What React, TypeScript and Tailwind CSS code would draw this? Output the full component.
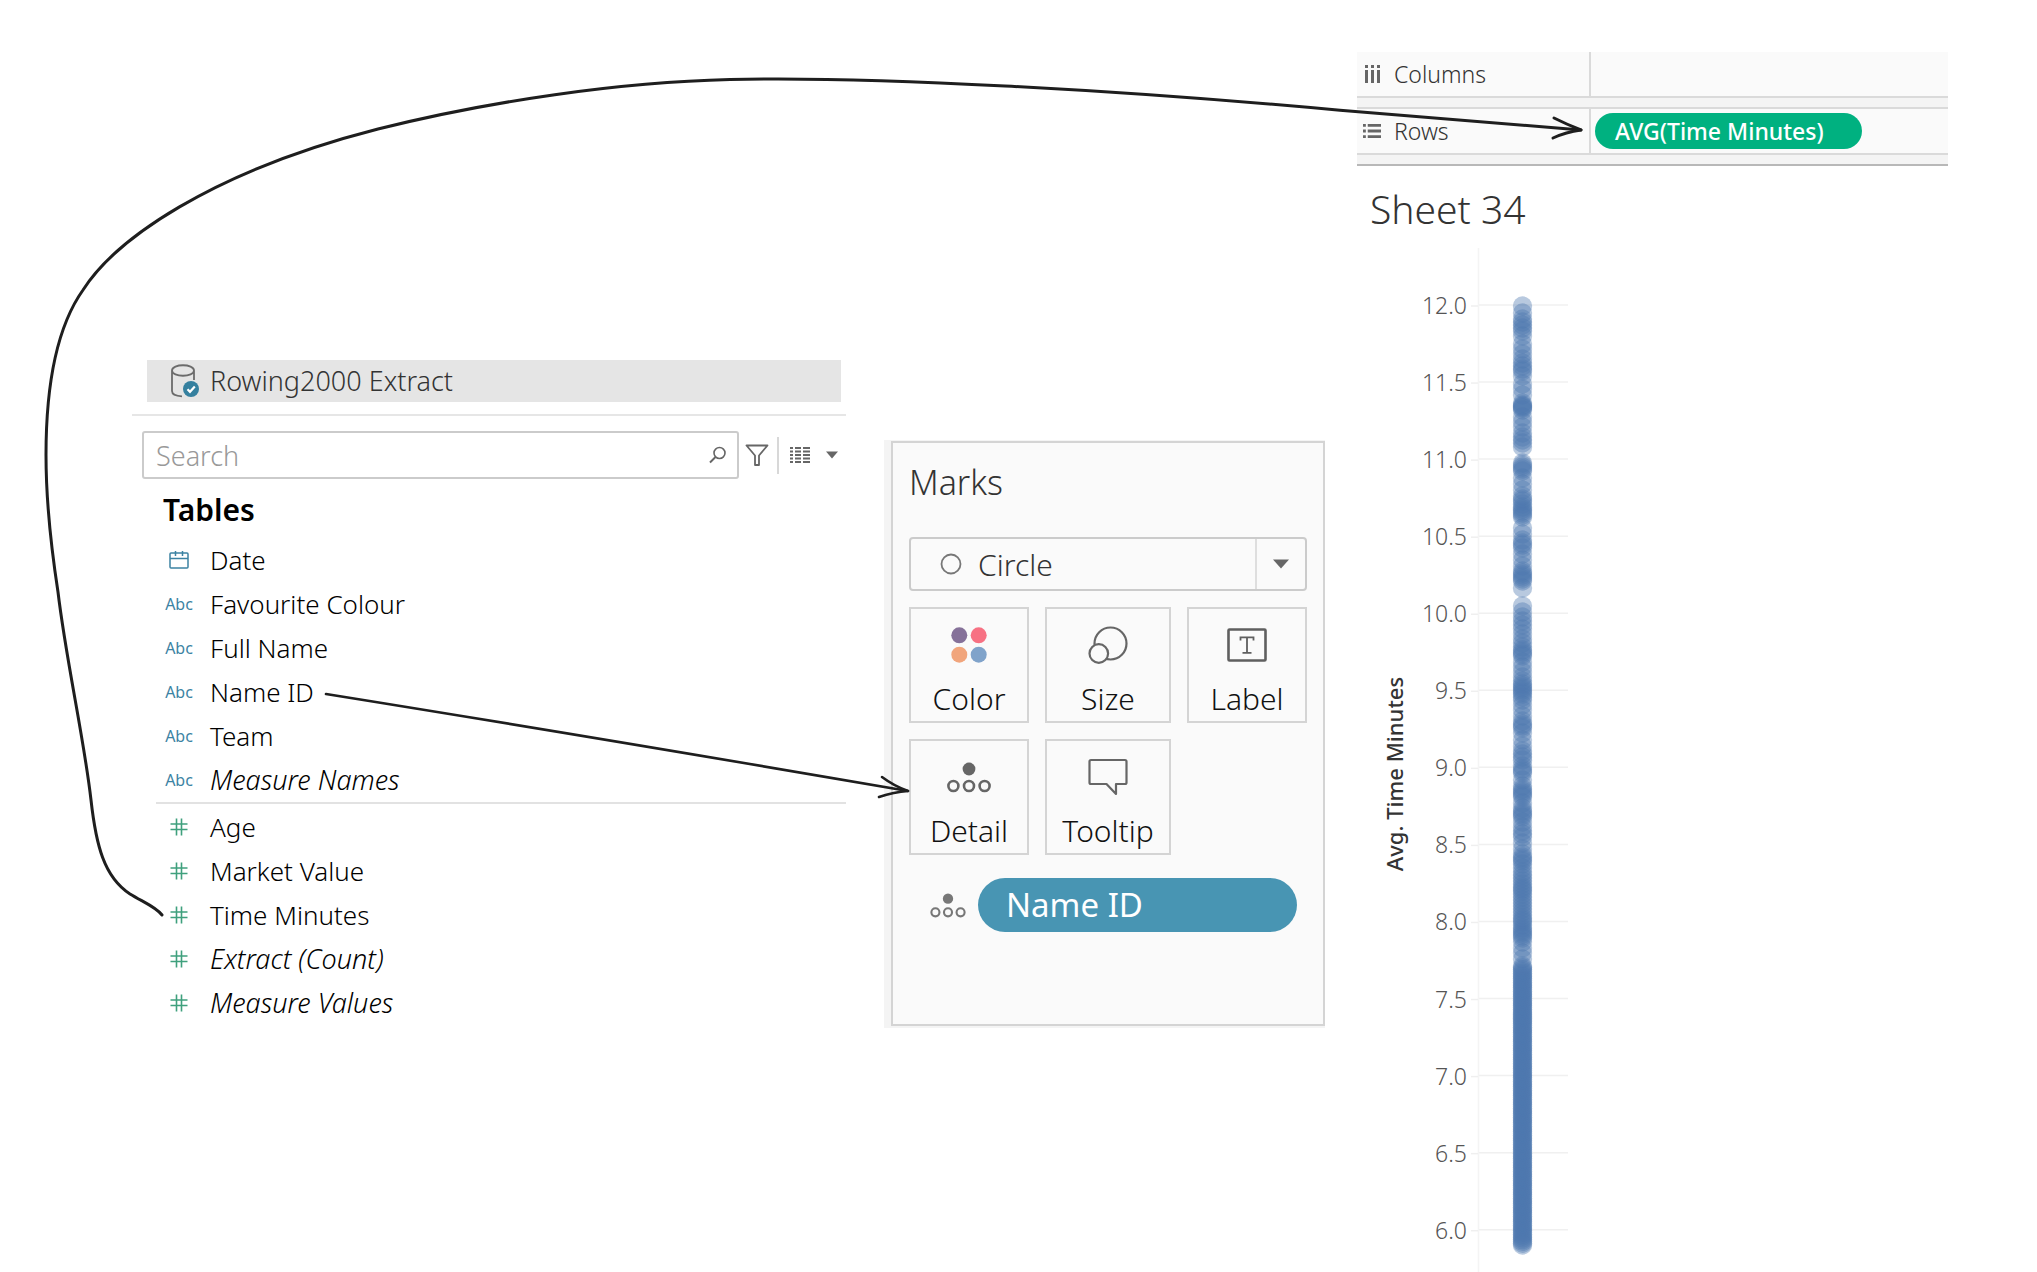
import type { ReactNode } from "react";

const DIMENSIONS = ["Favourite Colour", "Full Name", "Name ID", "Team"];
const MEASURES = ["Age", "Market Value", "Time Minutes"];
const GENERATED_MEASURES = ["Extract (Count)", "Measure Values"];

/* Vertical positions of the sparse marks; below them the marks run together. */
const SPARSE_MARKS = [
  306, 313, 319, 322, 325, 328, 331, 336, 344, 349, 354, 359, 363, 366, 369, 371, 376, 384, 389, 395, 403, 405, 406, 407, 408, 410, 417, 422, 427, 433, 437, 440, 443, 447,
  463, 465, 467, 469, 471, 478, 484, 490, 496, 499, 501, 504, 507, 509, 511, 513, 515, 517, 528, 534, 540, 543, 545, 548, 554, 560, 566, 571, 573, 575, 577, 579, 581, 588,
  606, 612, 617, 621, 625, 629, 634, 639, 643, 647, 650, 652, 654, 656, 662, 667, 672, 677, 681, 684, 686, 688, 690, 692, 694, 697, 700, 705, 710, 716, 721, 724, 726, 728,
  733, 740, 746, 751, 754, 757, 760, 766, 769, 771, 773, 780, 786, 789, 791, 793, 795, 797, 803, 808, 811, 813, 815, 817, 822, 827, 831, 834, 837, 843, 849, 854, 857, 859, 861,
  864, 868, 872, 875, 878, 881, 884, 887, 889, 891, 894, 897, 900, 903, 906, 909, 912, 915, 918, 920, 922, 925, 928, 930, 932, 934, 936, 938, 942, 948, 953, 959,
];
const DENSE_MARKS = Array.from({ length: 156 }, (_, i) => 966 + i * 1.8);
const TICKS = ["12.0", "11.5", "11.0", "10.5", "10.0", "9.5", "9.0", "8.5", "8.0", "7.5", "7.0", "6.5", "6.0"];

function HashIcon() {
  return (
    <svg width="18" height="18" viewBox="0 0 18 18" fill="none" stroke="#3fa07d" strokeWidth="1.6" aria-hidden="true">
      <path d="M6.5 0.5v17M11.5 0.5v17M0.5 6h17M0.5 11.5h17" />
    </svg>
  );
}

function CalendarIcon() {
  return (
    <svg width="20" height="20" viewBox="0 0 20 20" fill="none" stroke="#3c83a3" strokeWidth="1.5" aria-hidden="true">
      <rect x="1" y="3" width="18" height="15" rx="1" />
      <path d="M1 8.5h18M6.5 1v5M13.5 1v5" />
    </svg>
  );
}

function DetailIcon({ size, tone }: { size: number; tone: string }) {
  return (
    <svg width={size} height={Math.round(size * 0.7)} viewBox="0 0 44 31" fill="none" stroke={tone} strokeWidth="2.6" aria-hidden="true">
      <circle cx="22" cy="7" r="6.4" fill={tone} stroke="none" />
      <circle cx="6.4" cy="24" r="5" />
      <circle cx="22" cy="24" r="5" />
      <circle cx="37.6" cy="24" r="5" />
    </svg>
  );
}

function Field({ icon, children, generated }: { icon: ReactNode; children: ReactNode; generated?: boolean }) {
  return (
    <li className="flex h-11 items-center">
      <span className="flex w-10 shrink-0 items-center justify-center text-base font-normal text-[#3c83a3]">{icon}</span>
      <span className={generated ? "ml-[11px] text-[27px] italic" : "ml-[11px] text-[26px]"}>{children}</span>
    </li>
  );
}

function DataPane() {
  return (
    <section className="min-w-0 pt-[360px] font-light text-black">
      <header className="mr-[5px] ml-[15px] flex h-[42px] items-center bg-[#e5e5e5] pl-6">
        <svg width="28" height="34" viewBox="0 0 28 34" fill="none" stroke="#6b6b6b" strokeWidth="1.8" aria-hidden="true">
          <path d="M1 6.5C1 -0.5 23 -0.5 23 6.5S1 13.5 1 6.5V27C1 30 5 32 11 32.3M23 6.5V16" />
          <circle cx="20" cy="25" r="8" fill="#35809f" stroke="none" />
          <path d="M16.5 25.2l2.5 2.6 4.8-5.2" stroke="#fff" strokeWidth="2.2" />
        </svg>
        <h2 className="ml-[11px] text-[27px] leading-[42px] text-[#333]">Rowing2000 Extract</h2>
      </header>
      <hr className="mt-3 border-t-2 border-[#e6e6e6]" />

      <div className="mt-[15px] ml-2.5 flex h-12 items-center">
        <div className="flex h-full min-w-0 flex-1 items-center rounded-[3px] border-2 border-[#cbcbcb] pr-2.5 pl-3">
          <input
            type="text"
            aria-label="Search fields"
            placeholder="Search"
            className="h-[42px] min-w-0 flex-1 bg-transparent text-[27px] font-light outline-none placeholder:text-[#999]"
          />
          <svg width="18" height="18" viewBox="0 0 18 18" fill="none" stroke="#666" strokeWidth="1.6" aria-hidden="true">
            <circle cx="10.5" cy="7" r="5.5" />
            <path d="M6.5 11L1 16.5" strokeWidth="2" />
          </svg>
        </div>
        <button type="button" aria-label="Filter fields" className="ml-1.5">
          <svg width="24" height="24" viewBox="0 0 24 24" fill="none" stroke="#666" strokeWidth="1.8" aria-hidden="true">
            <path d="M1.5 2.5h21l-8.5 10v9.5h-4v-9.5z" strokeLinejoin="round" />
          </svg>
        </button>
        <span className="ml-2 h-[37px] w-0.5 bg-[#d8d8d8]" />
        <button type="button" aria-label="View as list" className="ml-[11px]">
          <svg width="20" height="16" viewBox="0 0 20 16" fill="#666" aria-hidden="true">
            {[0, 3.5, 7, 10.5, 14].map((y) => (
              <path key={y} d={`M0 ${y}h3v2h-3zM5 ${y}h6v2h-6zM13 ${y}h7v2h-7z`} />
            ))}
          </svg>
        </button>
        <button type="button" aria-label="View options" className="mr-2 ml-4">
          <svg width="12" height="8" viewBox="0 0 12 8" fill="#666" aria-hidden="true">
            <path d="M0 0.5h12L6 7.5z" />
          </svg>
        </button>
      </div>

      <h3 className="mt-2.5 ml-[31px] text-[30px] leading-[42px] font-semibold">Tables</h3>
      <ul className="mt-[7px] ml-6 border-b-2 border-[#e2e2e2] pl-[3px]">
        <Field icon={<CalendarIcon />}>Date</Field>
        {DIMENSIONS.map((name) => (
          <Field key={name} icon="Abc">{name}</Field>
        ))}
        <Field icon="Abc" generated>Measure Names</Field>
      </ul>
      <ul className="mt-px ml-6 pl-[3px]">
        {MEASURES.map((name) => (
          <Field key={name} icon={<HashIcon />}>{name}</Field>
        ))}
        {GENERATED_MEASURES.map((name) => (
          <Field key={name} icon={<HashIcon />} generated>{name}</Field>
        ))}
      </ul>
    </section>
  );
}

function MarkButton({ icon, label }: { icon: ReactNode; label: string }) {
  return (
    <button type="button" className="flex h-[116px] min-w-0 flex-col items-center justify-between border-2 border-[#d4d4d4] pt-3.5 text-[30px] leading-[44px] text-[#111]">
      <span className="flex h-11 items-center">{icon}</span>
      {label}
    </button>
  );
}

function MarksCard() {
  return (
    <section className="mt-[440px] mr-px ml-[7px] min-w-0 self-start bg-[#f4f4f4] pt-px pb-0.5 pl-[7px] font-light text-[#333]">
      <div className="h-[585px] border-2 border-[#d4d4d4] bg-[#fafafa] px-4">
        <h2 className="mt-4 text-[34px] leading-[46px]">Marks</h2>
        <div className="relative mt-8 flex h-[54px] items-center rounded-[4px] border-2 border-[#cbcbcb]">
          <svg className="pointer-events-none absolute left-[29px]" width="22" height="22" viewBox="0 0 22 22" fill="none" stroke="#777" strokeWidth="1.8" aria-hidden="true">
            <circle cx="11" cy="11" r="9.5" />
          </svg>
          <select aria-label="Mark type" className="h-full w-full appearance-none bg-transparent pl-[67px] text-[30px] font-light outline-none">
            <option>Circle</option>
          </select>
          <span className="pointer-events-none absolute right-0 flex h-full w-[50px] items-center justify-center border-l-2 border-[#dedede]">
            <svg width="16" height="10" viewBox="0 0 16 10" fill="#666" aria-hidden="true">
              <path d="M0 0.5h16L8 9.5z" />
            </svg>
          </span>
        </div>
        <div className="mt-4 grid grid-cols-[120fr_126fr_120fr] gap-4">
          <MarkButton
            label="Color"
            icon={
              <svg width="36" height="36" viewBox="0 0 36 36" aria-hidden="true">
                <circle cx="8.3" cy="8.3" r="8" fill="#857199" />
                <circle cx="27.7" cy="8.3" r="8" fill="#f77183" />
                <circle cx="8.3" cy="27.7" r="8" fill="#f1a57c" />
                <circle cx="27.7" cy="27.7" r="8" fill="#80a3ca" />
              </svg>
            }
          />
          <MarkButton
            label="Size"
            icon={
              <svg width="40" height="38" viewBox="0 0 40 38" fill="#fafafa" stroke="#666" strokeWidth="2.2" aria-hidden="true">
                <circle cx="22.5" cy="17.5" r="16" />
                <circle cx="10.8" cy="27.5" r="9.3" />
              </svg>
            }
          />
          <MarkButton
            label="Label"
            icon={
              <svg width="40" height="34" viewBox="0 0 40 34" fill="none" stroke="#5f5f5f" aria-hidden="true">
                <rect x="1.5" y="1.5" width="37" height="31" rx="1" strokeWidth="2.6" />
                <path d="M13.5 12.5V9.3h13v3.2M20 9.3v15.2M15.5 24.8h9" strokeWidth="1.8" />
              </svg>
            }
          />
          <MarkButton label="Detail" icon={<DetailIcon size={44} tone="#666" />} />
          <MarkButton
            label="Tooltip"
            icon={
              <svg width="40" height="38" viewBox="0 0 40 38" fill="none" stroke="#666" strokeWidth="2.2" strokeLinejoin="round" aria-hidden="true">
                <path d="M3 2h34q1.5 0 1.5 1.5v21q0 1.5-1.5 1.5h-9v10L18.5 26H3q-1.5 0-1.5-1.5v-21Q1.500 2 3 2z" />
              </svg>
            }
          />
        </div>
        <div className="mt-[23px] mr-2.5 flex items-center pl-[21px]">
          <DetailIcon size={36} tone="#777" />
          <button type="button" className="ml-3 h-[54px] flex-1 rounded-full bg-[#4895b3] pl-7 text-left text-[33px] leading-[54px] font-normal text-white">
            Name ID
          </button>
        </div>
      </div>
    </section>
  );
}

function Shelf({ icon, name, children }: { icon: ReactNode; name: string; children?: ReactNode }) {
  return (
    <div className="flex h-[46px] items-stretch border-b-2 border-[#dadada] bg-[#fafafa]">
      <div className="flex w-[234px] items-center gap-[13px] border-r-2 border-[#dadada] pl-1.5 text-[23px] font-light text-[#333]">
        <span className="flex w-[18px] justify-center">{icon}</span>
        <span>{name}</span>
      </div>
      <div className="flex flex-1 items-center pl-1">{children}</div>
    </div>
  );
}

function Chart() {
  return (
    <svg viewBox="0 0 591 1024" className="mt-[13px] block w-full font-light" role="img" aria-label="Avg. Time Minutes by Name ID">
      <path d="M121.5 0V1024" stroke="#f4f4f4" strokeWidth="1.5" />
      {TICKS.map((label, i) => {
        const y = 57 + i * 77.06;
        return (
          <g key={label}>
            <path d={`M114 ${y + 1}H121`} stroke="#efefef" strokeWidth="1.5" />
            <path d={`M122 ${y}H211`} stroke="#f0f0f0" strokeWidth="1.5" />
            <text x="110" y={y + 9} textAnchor="end" fontSize="23" fill="#555">{label}</text>
          </g>
        );
      })}
      <g fill="#4e79af" fillOpacity="0.4">
        {[...SPARSE_MARKS, ...DENSE_MARKS].map((y) => (
          <circle key={y} cx="165.5" cy={y - 248} r="9.7" />
        ))}
      </g>
      <text transform="translate(46 526) rotate(-90)" textAnchor="middle" fontSize="22" fontWeight="500" fill="#333">Avg. Time Minutes</text>
    </svg>
  );
}

function Worksheet() {
  return (
    <section className="min-w-0 pt-[52px]">
      <Shelf
        name="Columns"
        icon={
          <svg width="17" height="18" viewBox="0 0 17 18" fill="#666" aria-hidden="true">
            <path d="M1 0h3v3H1zM7 0h3v3H7zM13 0h3v3h-3zM1 5h3v13H1zM7 5h3v13H7zM13 5h3v13h-3z" />
          </svg>
        }
      />
      <div className="h-[11px] border-b-2 border-[#dadada] bg-[#f4f4f4]" />
      <Shelf
        name="Rows"
        icon={
          <svg width="18" height="18" viewBox="0 0 19 19" fill="#666" aria-hidden="true">
            <path d="M0 2h3v3H0zM5 2h14v3H5zM0 8h3v3H0zM5 8h14v3H5zM0 14h3v3H0zM5 14h14v3H5z" />
          </svg>
        }
      >
        <button type="button" className="h-9 w-[267px] rounded-full bg-[#00b180] pl-5 text-left text-[23px] leading-9 font-medium text-white">
          AVG(Time Minutes)
        </button>
      </Shelf>
      <div className="h-[11px] border-b-2 border-[#b8b8b8] bg-[#f4f4f4]" />
      <h1 className="mt-[17px] pl-[13px] text-[39px] leading-[52px] font-light text-[#333]">Sheet 34</h1>
      <Chart />
    </section>
  );
}

function Arrows() {
  return (
    <svg
      viewBox="0 0 2037 1272"
      className="pointer-events-none absolute inset-x-0 top-0 w-full"
      fill="none"
      stroke="#1e1e1e"
      strokeWidth="3"
      strokeLinecap="round"
      strokeLinejoin="round"
      aria-hidden="true"
    >
      <path d="M162 915C156 907 143 902 130 894C104 877 96 845 91 800C84 738 66 660 58 592C50 540 46 500 46 455C46 390 56 328 83 290C115 240 210 172 378 129C490 101 620 82 730 79.500C870 76 1120 90 1340 110.300C1420 117 1500 124 1581 130" />
      <path d="M1554 118Q1566 124 1581 130Q1566 132 1553 138" />
      <path d="M326 694Q600 738 908 791" strokeWidth="2.6" />
      <path d="M882 777Q894 786 908 791Q894 792 879 797" strokeWidth="2.6" />
    </svg>
  );
}

export default function App() {
  return (
    <main className="relative grid grid-cols-[714fr_449fr_591fr] gap-x-[31px] overflow-hidden bg-white pr-[89px] pl-[132px] font-['Noto_Sans',sans-serif]">
      <DataPane />
      <MarksCard />
      <Worksheet />
      <Arrows />
    </main>
  );
}
